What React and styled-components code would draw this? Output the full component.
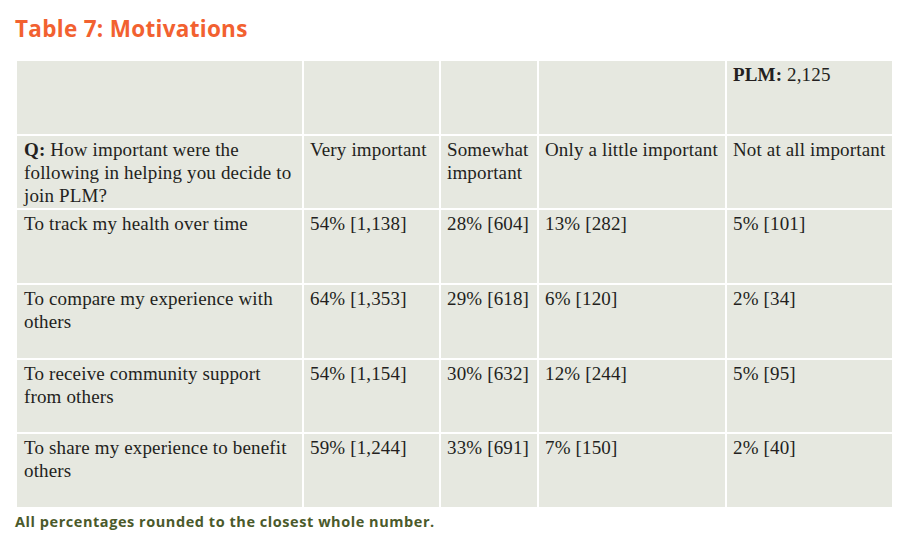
import React from 'react';
import styled, { createGlobalStyle } from 'styled-components';

const GlobalStyle = createGlobalStyle`
  body {
    margin: 0;
    background: #ffffff;
  }
`;

const rows = [
  ['To track my health over time', '54% [1,138]', '28% [604]', '13% [282]', '5% [101]'],
  ['To compare my experience with others', '64% [1,353]', '29% [618]', '6% [120]', '2% [34]'],
  ['To receive community support from others', '54% [1,154]', '30% [632]', '12% [244]', '5% [95]'],
  ['To share my experience to benefit others', '59% [1,244]', '33% [691]', '7% [150]', '2% [40]'],
];

const headers = ['Very important', 'Somewhat important', 'Only a little important', 'Not at all important'];

const Page = styled.div`
  padding: 13px 15px 0 15px;
  width: 907px;
  height: 547px;
  box-sizing: border-box;
`;

const Title = styled.h1`
  margin: 0 0 17px 0;
  font-family: "Open Sans", "Liberation Sans", sans-serif;
  font-weight: 700;
  font-size: 22.5px;
  line-height: 31px;
  letter-spacing: 0.3px;
  color: #f26130;
`;

const Grid = styled.div`
  margin-left: 2px;
  display: grid;
  grid-template-columns: 285px 135px 96px 186px 165px;
  grid-auto-rows: 72.67px;
  gap: 2px;
`;

// last column is tight, so it gets no right padding
const Cell = styled.div`
  background: #e6e8e0;
  padding: 2px 6px 0 ${p => (p.$first ? 7 : 6)}px;
  &:nth-child(5n) {
    padding-right: 0;
  }
  font-family: "Liberation Serif", "Times New Roman", serif;
  font-size: 19px;
  line-height: 23px;
  color: #231f20;
  letter-spacing: 0.15px;
  white-space: ${p => (p.$nowrap ? 'nowrap' : 'normal')};
`;

const Note = styled.p`
  margin: 6px 0 0 0;
  font-family: "Open Sans", "Liberation Sans", sans-serif;
  font-weight: 700;
  font-size: 14.5px;
  line-height: 18px;
  letter-spacing: 0.55px;
  color: #4b5a2b;
`;

export default function App() {
  return (
    <Page>
      <GlobalStyle />
      <Title>Table 7: Motivations</Title>
      <Grid>
        <Cell $first />
        <Cell />
        <Cell />
        <Cell />
        <Cell>
          <b>PLM:</b> 2,125
        </Cell>
        <Cell $first>
          <b>Q:</b> How important were the following in helping you decide to join PLM?
        </Cell>
        {headers.map((h, i) => (
          <Cell key={h} $nowrap={i >= 2}>
            {h}
          </Cell>
        ))}
        {rows.map(r =>
          r.map((v, i) => (
            <Cell key={r[0] + i} $first={i === 0}>
              {v}
            </Cell>
          ))
        )}
      </Grid>
      <Note>All percentages rounded to the closest whole number.</Note>
    </Page>
  );
}
